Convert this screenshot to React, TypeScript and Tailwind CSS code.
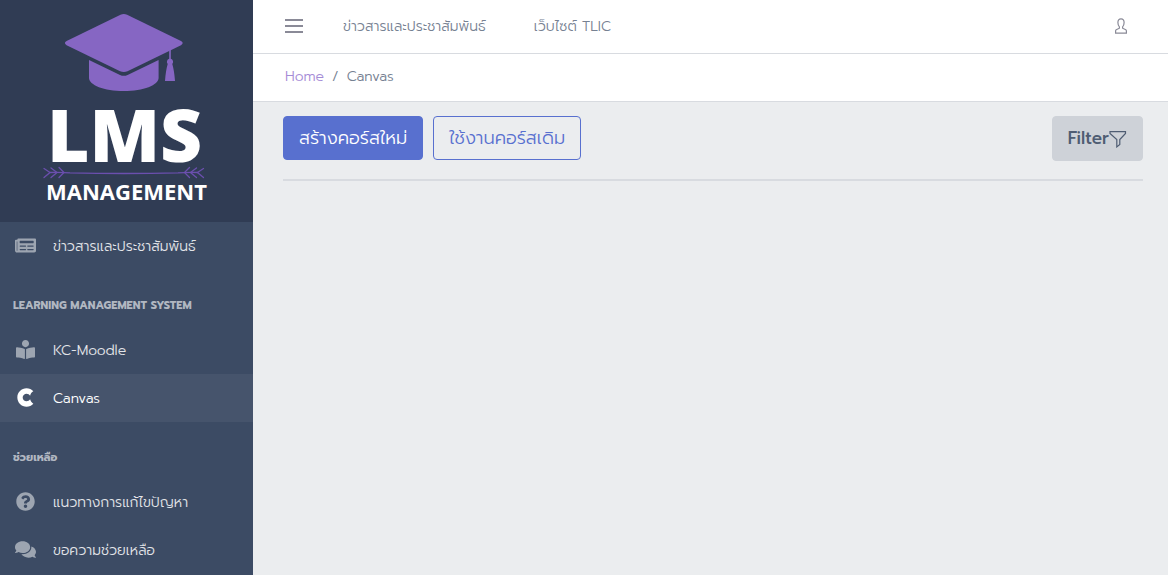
import { FaBookReader, FaComments, FaCuttlefish, FaNewspaper, FaQuestionCircle } from 'react-icons/fa';
import type { IconType } from 'react-icons';

interface NavItem {
  title: string;
  icon: IconType;
  active?: boolean;
}

interface NavGroup {
  heading?: string;
  items: NavItem[];
}

const navGroups: NavGroup[] = [
  { items: [{ title: 'ข่าวสารและประชาสัมพันธ์', icon: FaNewspaper }] },
  {
    heading: 'Learning Management System',
    items: [
      { title: 'KC-Moodle', icon: FaBookReader },
      { title: 'Canvas', icon: FaCuttlefish, active: true }
    ]
  },
  {
    heading: 'ช่วยเหลือ',
    items: [
      { title: 'แนวทางการแก้ไขปัญหา', icon: FaQuestionCircle },
      { title: 'ขอความช่วยเหลือ', icon: FaComments }
    ]
  }
];

const Logo = () => (
  <svg viewBox="0 0 253 222" className="block w-full" role="img" aria-label="LMS Management">
    <g fill="#8666c3">
      <path d="M120.500 14.800q3.300-1.500 6.600 0L181 41q3.400 2 0 4.200L127.500 71.200q-3.700 1.600-7.400 0L66.600 45.200q-3.400-2.200 0-4.200z" />
      <path d="M89 60l31 15q3.800 1.700 7.600 0l31-15v18c0 7-15 13-34.800 13S89 85 89 78z" />
      <path d="M169.200 50.500l1.600-.8v9.100a3.200 3.200 0 0 1 1.500 5.200c1.300 4.500 2.200 10 2.700 17h-10c.5-7 1.400-12.500 2.700-17a3.200 3.200 0 0 1 1.500-5.200z" />
    </g>
    <g fill="none" stroke="#6b4fae" strokeWidth="1.300" strokeLinecap="round">
      <path d="M50 172.500q10-.3 20 .3q54 1.400 108 0q10-.6 20-.3" />
      <path d="M44 168.500l6 4-6 5M51 168l6 4.500-6 5M59 167.500l5 5-5 5" />
      <path d="M203.500 168.500l-6 4 6 5M196.500 168l-6 4.500 6 5M189.500 167.500l-5 5 5 5" />
    </g>
    <text x="47" y="162" fontSize="73" className="fill-white font-['Open_Sans'] font-extrabold">LMS</text>
    <text x="46" y="200" fontSize="22" className="fill-white font-['Open_Sans'] font-bold">MANAGEMENT</text>
  </svg>
);

const Sidebar = () => (
  <aside className="w-[253px] shrink-0 bg-[#3c4b64]">
    <div className="bg-[#303c54]">
      <Logo />
    </div>
    <nav>
      {navGroups.map((group, index) => (
        <div key={index}>
          {group.heading && (
            <h2 className="mt-4 h-10 pl-[13px] flex items-center text-[11px] font-bold uppercase text-[#b1b7c1]">
              {group.heading}
            </h2>
          )}
          {group.items.map(({ title, icon: Icon, active }) => (
            <a
              key={title}
              href="#"
              className={`flex h-12 items-center gap-[2px] text-sm font-light ${
                active ? 'bg-[#46546c] text-white' : 'text-[#e3e5e9]'
              }`}
            >
              <span className={`flex w-[51px] shrink-0 justify-center pb-px ${active ? 'text-white' : 'text-[#9da5b1]'}`}>
                <Icon className="h-[19px] w-[21px]" />
              </span>
              <span className="pt-px">{title}</span>
            </a>
          ))}
        </div>
      ))}
    </nav>
  </aside>
);

const Header = () => (
  <header className="bg-white">
    <div className="flex h-[54px] items-center border-b border-[#d8dbe0] pl-8 pr-10 text-sm font-light text-[#768192]">
      <button type="button" aria-label="Menu" className="mr-10 pb-px text-[#8a8a97]">
        <svg viewBox="0 0 18 14" className="h-[14px] w-[18px]" fill="currentColor">
          <path d="M0 0h18v2H0zM0 6h18v2H0zM0 12h18v2H0z" />
        </svg>
      </button>
      <a href="#" className="mr-12">ข่าวสารและประชาสัมพันธ์</a>
      <a href="#">เว็บไซต์ TLIC</a>
      <button type="button" aria-label="Account" className="ml-auto pb-px text-[#8a8a97]">
        <svg viewBox="0 0 14 16" className="h-4 w-[14px]" fill="none" stroke="currentColor" strokeWidth="1.200">
          <path d="M7 .8C4.900.8 3.900 2.300 3.900 4.600c0 2 .6 3.400 1.500 4.300v1.300L2.200 11.700Q1.600 12.100 1.600 13v2.100h10.800v-2.100q0-.9-.6-1.300L8.600 10.200V8.900c.9-.9 1.500-2.300 1.500-4.300C10.100 2.300 9.100.8 7 .8z" />
        </svg>
      </button>
    </div>
    <nav aria-label="Breadcrumb" className="flex h-12 items-center gap-2 border-b border-[#d8dbe0] px-8 pb-[2px] text-sm font-light text-[#768192]">
      <a href="#" className="text-[#a58bd6]">Home</a>
      <span>/</span>
      <span>Canvas</span>
    </nav>
  </header>
);

export default function App() {
  return (
    <div className="flex min-h-screen bg-[#ebedef] font-['Prompt','Inter','Noto_Sans_Thai','Noto_Sans',sans-serif]">
      <Sidebar />
      <div className="min-w-0 flex-1">
        <Header />
        <main className="pl-[30px] pr-[25px] pt-[14px]">
          <div className="flex items-start gap-[10px] border-b-2 border-[#d8dbe0] pb-[18px] text-lg">
            <button type="button" className="h-11 rounded border border-[#5870cf] bg-[#5870cf] px-[15px] font-light text-white">
              สร้างคอร์สใหม่
            </button>
            <button type="button" className="h-11 rounded border border-[#5870cf] px-[15px] font-light text-[#5870cf]">
              ใช้งานคอร์สเดิม
            </button>
            <button type="button" className="ml-auto flex h-[45px] items-center rounded border border-[#ced2d8] bg-[#ced2d8] px-[15px] text-[17px] font-medium text-[#4f5d73]">
              Filter
              <svg viewBox="0 0 18 18" className="size-[18px]" fill="none" stroke="currentColor" strokeWidth="1.200">
                <path d="M1 1.600h15.500v1.800L10.800 9.600v4.900l-3 2.400V9.600L1 3.400z" />
              </svg>
            </button>
          </div>
        </main>
      </div>
    </div>
  );
}
